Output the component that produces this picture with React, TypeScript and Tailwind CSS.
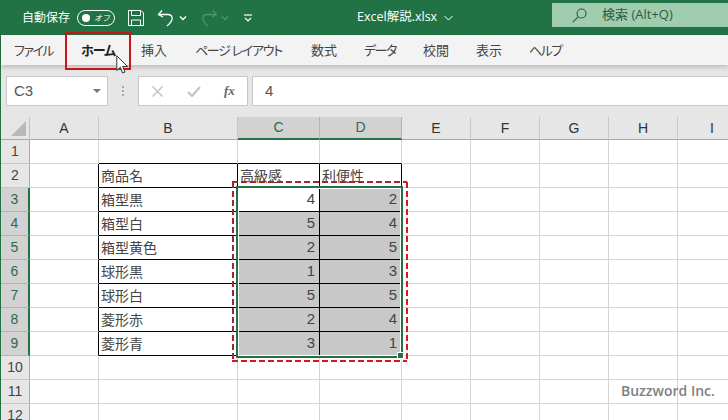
import React from "react";

const jp = "font-['Open_Sans','Noto_Sans_CJK_JP',sans-serif]";
const num = "font-['Liberation_Sans',sans-serif]";
const palt = "[font-feature-settings:'palt']";

const tabs: [string, string][] = [
  ["ファイル", `w-[67px] pl-[13px] tracking-[-1.5px] ${palt}`],
  ["ホーム", `w-[73px] pl-[13px] font-bold tracking-[-1px] text-[#222] ${palt}`],
  ["挿入", "w-[54px]"],
  ["ページ レイアウト", `w-[116px] tracking-[-1.3px] ${palt}`],
  ["数式", "w-[53px]"],
  ["データ", `w-[59px] tracking-[-1.5px] ${palt}`],
  ["校閲", "w-[53px]"],
  ["表示", "w-[53px]"],
  ["ヘルプ", `w-[60px] tracking-[-1.5px] ${palt}`],
];

const cols = ["A", "B", "C", "D", "E", "F", "G", "H", "I"];
const rows: Record<number, [string, string, string]> = {
  2: ["商品名", "高級感", "利便性"],
  3: ["箱型黒", "4", "2"],
  4: ["箱型白", "5", "4"],
  5: ["箱型黄色", "2", "5"],
  6: ["球形黒", "1", "3"],
  7: ["球形白", "5", "5"],
  8: ["菱形赤", "2", "4"],
  9: ["菱形青", "3", "1"],
};

function Cell({ r, c }: { r: number; c: number }) {
  const inTable = r >= 2 && r <= 9 && c >= 1 && c <= 3;
  const blackBottom = r >= 1 && r <= 9 && c >= 1 && c <= 3;
  const blackRight = r >= 2 && r <= 9 && c >= 0 && c <= 3;
  const selected = r >= 3 && r <= 9 && (c === 2 || c === 3) && !(r === 3 && c === 2);
  const data = inTable ? rows[r][c - 1] : "";
  const numeric = r >= 3 && c >= 2;
  return (
    <div
      className={`flex items-center overflow-hidden border-r border-b whitespace-nowrap ${blackBottom ? "border-b-black" : "border-b-[#d4d4d4]"} ${blackRight ? "border-r-black" : "border-r-[#d4d4d4]"} ${selected ? "bg-[#c8c8c8]" : "bg-white"} ${numeric ? `justify-end pr-[4px] text-[15px] text-[#444] ${num}` : `pl-[2px] text-[14px] text-[#444] ${jp}`}`}
    >
      {data}
    </div>
  );
}

function Chevron({ dim }: { dim?: boolean }) {
  return (
    <svg width="8" height="6" viewBox="0 0 8 6" fill="none" stroke={dim ? "#4f9268" : "white"} strokeWidth="1.4">
      <path d="M1 1.5 L4 4.5 L7 1.5" />
    </svg>
  );
}

export default function App() {
  const sel = (r: number) => r >= 3 && r <= 9;
  return (
    <div className={`relative h-[420px] w-[728px] overflow-hidden bg-[#e6e6e6] ${jp}`}>
      {/* title bar */}
      <div className="flex h-[35px] items-center bg-[#217346] text-white">
        <span className="ml-[22px] w-[55px] text-[12px]">自動保存</span>
        <div className="flex h-[16px] w-[38px] items-center justify-between rounded-full border border-white pl-[4px] pr-[4px]">
          <span className="h-[8px] w-[8px] rounded-full bg-white" />
          <span className="text-[8px] italic leading-none">オフ</span>
        </div>
        <svg className="ml-[13px]" width="16" height="16" viewBox="0 0 16 16" fill="none" stroke="white" strokeWidth="1">
          <path d="M.5.5 H13 L15.5 3 V15.5 H.5 Z" />
          <path d="M3.5 .5 V5.5 H12.5 V.5" />
          <path d="M3.5 15.5 V10 H12.5 V15.5" />
        </svg>
        <svg className="ml-[13px]" width="18" height="18" viewBox="0 0 18 18" fill="none" stroke="white" strokeWidth="1.3">
          <path d="M5 1.5 L1.5 5.5 L6 8" />
          <path d="M1.8 5.5 H10.5 C16 5.5 17.5 11 10 17" />
        </svg>
        <span className="ml-[4px]"><Chevron /></span>
        <svg className="ml-[13px]" width="18" height="18" viewBox="0 0 18 18" fill="none" stroke="#4f9268" strokeWidth="1.3">
          <path d="M13 1.5 L16.5 5.5 L12 8" />
          <path d="M16.2 5.5 H7.5 C2 5.5 .5 11 8 17" />
        </svg>
        <span className="ml-[3px]"><Chevron dim /></span>
        <svg className="ml-[15px]" width="8" height="8" viewBox="0 0 8 8" fill="none" stroke="white" strokeWidth="1.2">
          <path d="M0 1 H8" />
          <path d="M1 4 L4 7 L7 4" />
        </svg>
        <span className="ml-[105px] text-[12.5px]">Excel解説.xlsx</span>
        <span className="ml-[7px]"><svg width="9" height="6" viewBox="0 0 9 6" fill="none" stroke="white" strokeWidth="1"><path d="M.5 1 L4.5 5 L8.5 1" /></svg></span>
        <div className="ml-auto mb-[5px] flex h-[24px] w-[176px] items-center bg-[#9fcdae] pl-[20px] text-[13px] text-[#2d5a3e]">
          <svg width="15" height="15" viewBox="0 0 15 15" fill="none" stroke="#2d5a3e" strokeWidth="1.1">
            <circle cx="9.5" cy="5.5" r="4.5" />
            <path d="M6.2 8.8 L.8 14.2" />
          </svg>
          <span className="ml-[15px]">検索 (Alt+Q)</span>
        </div>
      </div>

      <div className="flex h-[385px] flex-col border-l border-l-[#217346]">
        {/* ribbon tabs */}
        <div className="relative flex h-[30px] shrink-0 items-center bg-[#f3f3f3] pt-[1px] text-[13px] text-[#444] shadow-[0_2px_5px_rgba(0,0,0,0.2)]">
          {tabs.map(([t, cls]) => (
            <span key={t} className={`whitespace-nowrap ${cls}`}>{t}</span>
          ))}
        </div>

        {/* formula bar */}
        <div className="mt-[11px] flex h-[30px] shrink-0 items-stretch">
          <div className={`ml-[5px] flex w-[102px] items-center justify-between border border-[#c8c8c8] bg-white pl-[7px] pr-[6px] text-[15px] text-[#555] ${num}`}>
            <span>C3</span>
            <span className="h-0 w-0 border-x-[4px] border-t-[4px] border-x-transparent border-t-[#777]" />
          </div>
          <div className="flex w-[30px] flex-col items-center justify-center gap-[2px]">
            <span className="h-[2px] w-[2px] bg-[#a8a8a8]" />
            <span className="h-[2px] w-[2px] bg-[#a8a8a8]" />
            <span className="h-[2px] w-[2px] bg-[#a8a8a8]" />
          </div>
          <div className="flex w-[110px] items-center border border-[#c8c8c8] bg-white">
            <svg className="ml-[13px]" width="11" height="11" viewBox="0 0 11 11" fill="none" stroke="#c4c4c4" strokeWidth="1.5">
              <path d="M.5 .5 L10.5 10.5 M10.5 .5 L.5 10.5" />
            </svg>
            <svg className="ml-[24px]" width="14" height="11" viewBox="0 0 14 11" fill="none" stroke="#c4c4c4" strokeWidth="2.2">
              <path d="M1 6 L5 10 L13 1" />
            </svg>
            <span className="ml-[23px] font-['Liberation_Serif',serif] text-[13px] font-bold italic text-[#666]">fx</span>
          </div>
          <div className={`ml-[4px] flex flex-1 items-center border border-r-0 border-[#c8c8c8] bg-white pl-[12px] text-[15px] text-[#555] ${num}`}>4</div>
        </div>

        {/* sheet */}
        <div className={`mt-[11px] grid flex-1 grid-cols-[29px_69px_139px_82px_82px_69px_69px_69px_69px_69px] grid-rows-[23px_repeat(12,24px)] ${num}`}>
          <div className="relative border-r border-b border-r-[#c0c0c0] border-b-[#a8a8a8] bg-[#e6e6e6]">
            <span className="absolute bottom-[3px] right-[3px] h-0 w-0 border-b-[15px] border-l-[15px] border-b-[#b9b9b9] border-l-transparent" />
          </div>
          {cols.map((c) => {
            const on = c === "C" || c === "D";
            return (
              <div
                key={c}
                className={`flex items-center justify-center border-r text-[14px] ${on ? "border-b-2 border-r-[#b4b4b4] border-b-[#217346] bg-[#d2d2d2] text-[#2f6a4a]" : "border-b border-r-[#c8c8c8] border-b-[#a8a8a8] text-[#333]"}`}
              >
                {c}
              </div>
            );
          })}
          {Array.from({ length: 12 }, (_, i) => i + 1).map((r) => (
            <React.Fragment key={r}>
              <div
                className={`flex items-center justify-center border-b text-[14px] ${sel(r) ? "border-r-2 border-r-[#217346] border-b-[#b4b4b4] bg-[#d2d2d2] text-[#2f6a4a]" : "border-r border-r-[#a8a8a8] border-b-[#c8c8c8] text-[#444]"}`}
              >
                {r}
              </div>
              {cols.map((_, c) => (
                <Cell key={c} r={r} c={c} />
              ))}
            </React.Fragment>
          ))}
        </div>
      </div>

      {/* selection */}
      <div className="absolute left-[236px] top-[186px] h-[172px] w-[167px] border-2 border-[#217346]">
        <div className="h-full w-full border border-white" />
      </div>
      <div className="absolute left-[397px] top-[352px] h-[7px] w-[7px] border border-white bg-[#217346]" />

      {/* annotations */}
      <svg className="absolute left-[231px] top-[181px]" width="178" height="182" viewBox="0 0 178 182" fill="none" strokeWidth="2" strokeDasharray="6 3">
        <path d="M1 1 H176" stroke="#a8242e" />
        <path d="M2 1 V180" stroke="#a8242e" />
        <path d="M176 1 V180" stroke="#e0141e" />
        <path d="M1 180 H176" stroke="#d8141e" />
      </svg>
      <div className="absolute left-[65px] top-[32px] h-[38px] w-[66px] border-2 border-[#c81515]" />
      <svg className="absolute left-[116px] top-[55px]" width="13" height="20" viewBox="0 0 13 20" fill="white" stroke="#333" strokeWidth="1">
        <path d="M.8 .8 V15.5 L4.3 12.2 L6.6 18 L9 17 L6.7 11.5 L11.5 11.5 Z" />
      </svg>

      <div className="absolute left-[621px] top-[380px] font-['Open_Sans',sans-serif] text-[14px] font-semibold text-[#808080]">Buzzword Inc.</div>
    </div>
  );
}
